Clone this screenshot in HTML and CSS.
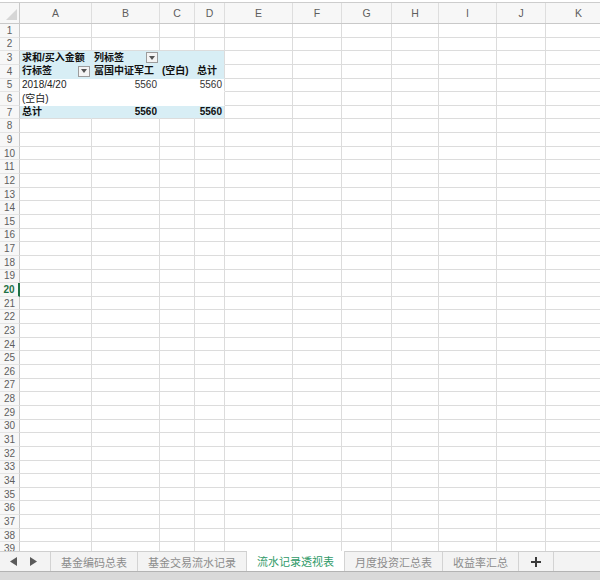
FILE: index.html
```html
<!DOCTYPE html>
<html lang="zh-CN">
<head>
<meta charset="utf-8">
<title>流水记录透视表</title>
<link rel="stylesheet" href="styles.css">
</head>
<body>
<div class="app">
  <div class="top"></div>
  <div class="sheet">
    <div class="row head">
      <div class="corner"><svg width="19" height="20" viewBox="0 0 19 20"><polygon points="6,17 17,17 17,6" fill="#d6d6d6"/></svg></div>
      <div class="ch">A</div><div class="ch">B</div><div class="ch">C</div><div class="ch">D</div><div class="ch">E</div><div class="ch">F</div><div class="ch">G</div><div class="ch">H</div><div class="ch">I</div><div class="ch">J</div><div class="ch">K</div>
    </div>
    <div class="row"><div class="rh">1</div><div class="c"></div><div class="c"></div><div class="c"></div><div class="c"></div><div class="c"></div><div class="c"></div><div class="c"></div><div class="c"></div><div class="c"></div><div class="c"></div><div class="c"></div></div>
    <div class="row"><div class="rh">2</div><div class="c"></div><div class="c"></div><div class="c"></div><div class="c"></div><div class="c"></div><div class="c"></div><div class="c"></div><div class="c"></div><div class="c"></div><div class="c"></div><div class="c"></div></div>
    <div class="row"><div class="rh">3</div>
      <div class="c pv blue b">求和/买入金额</div>
      <div class="c pv blue b">列标签<span class="dd"><svg width="6" height="4" viewBox="0 0 6 4"><polygon points="0,0 6,0 3,4" fill="#555"/></svg></span></div>
      <div class="c pv blue"></div>
      <div class="c pv blue end"></div>
      <div class="c"></div><div class="c"></div><div class="c"></div><div class="c"></div><div class="c"></div><div class="c"></div><div class="c"></div></div>
    <div class="row"><div class="rh">4</div>
      <div class="c pv blue b">行标签<span class="dd"><svg width="6" height="4" viewBox="0 0 6 4"><polygon points="0,0 6,0 3,4" fill="#555"/></svg></span></div>
      <div class="c pv blue b">富国中证军工</div>
      <div class="c pv blue b">(空白)</div>
      <div class="c pv blue b end">总计</div>
      <div class="c"></div><div class="c"></div><div class="c"></div><div class="c"></div><div class="c"></div><div class="c"></div><div class="c"></div></div>
    <div class="row"><div class="rh">5</div>
      <div class="c pv">2018/4/20</div>
      <div class="c pv r">5560</div>
      <div class="c pv"></div>
      <div class="c pv r end">5560</div>
      <div class="c"></div><div class="c"></div><div class="c"></div><div class="c"></div><div class="c"></div><div class="c"></div><div class="c"></div></div>
    <div class="row"><div class="rh">6</div>
      <div class="c pv">(空白)</div>
      <div class="c pv"></div>
      <div class="c pv"></div>
      <div class="c pv end"></div>
      <div class="c"></div><div class="c"></div><div class="c"></div><div class="c"></div><div class="c"></div><div class="c"></div><div class="c"></div></div>
    <div class="row"><div class="rh">7</div>
      <div class="c pv blue b last">总计</div>
      <div class="c pv blue b r last">5560</div>
      <div class="c pv blue last"></div>
      <div class="c pv blue b r end last">5560</div>
      <div class="c"></div><div class="c"></div><div class="c"></div><div class="c"></div><div class="c"></div><div class="c"></div><div class="c"></div></div>
    <div class="row"><div class="rh">8</div><div class="c"></div><div class="c"></div><div class="c"></div><div class="c"></div><div class="c"></div><div class="c"></div><div class="c"></div><div class="c"></div><div class="c"></div><div class="c"></div><div class="c"></div></div>
    <div class="row"><div class="rh">9</div><div class="c"></div><div class="c"></div><div class="c"></div><div class="c"></div><div class="c"></div><div class="c"></div><div class="c"></div><div class="c"></div><div class="c"></div><div class="c"></div><div class="c"></div></div>
    <div class="row"><div class="rh">10</div><div class="c"></div><div class="c"></div><div class="c"></div><div class="c"></div><div class="c"></div><div class="c"></div><div class="c"></div><div class="c"></div><div class="c"></div><div class="c"></div><div class="c"></div></div>
    <div class="row"><div class="rh">11</div><div class="c"></div><div class="c"></div><div class="c"></div><div class="c"></div><div class="c"></div><div class="c"></div><div class="c"></div><div class="c"></div><div class="c"></div><div class="c"></div><div class="c"></div></div>
    <div class="row"><div class="rh">12</div><div class="c"></div><div class="c"></div><div class="c"></div><div class="c"></div><div class="c"></div><div class="c"></div><div class="c"></div><div class="c"></div><div class="c"></div><div class="c"></div><div class="c"></div></div>
    <div class="row"><div class="rh">13</div><div class="c"></div><div class="c"></div><div class="c"></div><div class="c"></div><div class="c"></div><div class="c"></div><div class="c"></div><div class="c"></div><div class="c"></div><div class="c"></div><div class="c"></div></div>
    <div class="row"><div class="rh">14</div><div class="c"></div><div class="c"></div><div class="c"></div><div class="c"></div><div class="c"></div><div class="c"></div><div class="c"></div><div class="c"></div><div class="c"></div><div class="c"></div><div class="c"></div></div>
    <div class="row"><div class="rh">15</div><div class="c"></div><div class="c"></div><div class="c"></div><div class="c"></div><div class="c"></div><div class="c"></div><div class="c"></div><div class="c"></div><div class="c"></div><div class="c"></div><div class="c"></div></div>
    <div class="row"><div class="rh">16</div><div class="c"></div><div class="c"></div><div class="c"></div><div class="c"></div><div class="c"></div><div class="c"></div><div class="c"></div><div class="c"></div><div class="c"></div><div class="c"></div><div class="c"></div></div>
    <div class="row"><div class="rh">17</div><div class="c"></div><div class="c"></div><div class="c"></div><div class="c"></div><div class="c"></div><div class="c"></div><div class="c"></div><div class="c"></div><div class="c"></div><div class="c"></div><div class="c"></div></div>
    <div class="row"><div class="rh">18</div><div class="c"></div><div class="c"></div><div class="c"></div><div class="c"></div><div class="c"></div><div class="c"></div><div class="c"></div><div class="c"></div><div class="c"></div><div class="c"></div><div class="c"></div></div>
    <div class="row"><div class="rh">19</div><div class="c"></div><div class="c"></div><div class="c"></div><div class="c"></div><div class="c"></div><div class="c"></div><div class="c"></div><div class="c"></div><div class="c"></div><div class="c"></div><div class="c"></div></div>
    <div class="row"><div class="rh sel">20</div><div class="c"></div><div class="c"></div><div class="c"></div><div class="c"></div><div class="c"></div><div class="c"></div><div class="c"></div><div class="c"></div><div class="c"></div><div class="c"></div><div class="c"></div></div>
    <div class="row"><div class="rh">21</div><div class="c"></div><div class="c"></div><div class="c"></div><div class="c"></div><div class="c"></div><div class="c"></div><div class="c"></div><div class="c"></div><div class="c"></div><div class="c"></div><div class="c"></div></div>
    <div class="row"><div class="rh">22</div><div class="c"></div><div class="c"></div><div class="c"></div><div class="c"></div><div class="c"></div><div class="c"></div><div class="c"></div><div class="c"></div><div class="c"></div><div class="c"></div><div class="c"></div></div>
    <div class="row"><div class="rh">23</div><div class="c"></div><div class="c"></div><div class="c"></div><div class="c"></div><div class="c"></div><div class="c"></div><div class="c"></div><div class="c"></div><div class="c"></div><div class="c"></div><div class="c"></div></div>
    <div class="row"><div class="rh">24</div><div class="c"></div><div class="c"></div><div class="c"></div><div class="c"></div><div class="c"></div><div class="c"></div><div class="c"></div><div class="c"></div><div class="c"></div><div class="c"></div><div class="c"></div></div>
    <div class="row"><div class="rh">25</div><div class="c"></div><div class="c"></div><div class="c"></div><div class="c"></div><div class="c"></div><div class="c"></div><div class="c"></div><div class="c"></div><div class="c"></div><div class="c"></div><div class="c"></div></div>
    <div class="row"><div class="rh">26</div><div class="c"></div><div class="c"></div><div class="c"></div><div class="c"></div><div class="c"></div><div class="c"></div><div class="c"></div><div class="c"></div><div class="c"></div><div class="c"></div><div class="c"></div></div>
    <div class="row"><div class="rh">27</div><div class="c"></div><div class="c"></div><div class="c"></div><div class="c"></div><div class="c"></div><div class="c"></div><div class="c"></div><div class="c"></div><div class="c"></div><div class="c"></div><div class="c"></div></div>
    <div class="row"><div class="rh">28</div><div class="c"></div><div class="c"></div><div class="c"></div><div class="c"></div><div class="c"></div><div class="c"></div><div class="c"></div><div class="c"></div><div class="c"></div><div class="c"></div><div class="c"></div></div>
    <div class="row"><div class="rh">29</div><div class="c"></div><div class="c"></div><div class="c"></div><div class="c"></div><div class="c"></div><div class="c"></div><div class="c"></div><div class="c"></div><div class="c"></div><div class="c"></div><div class="c"></div></div>
    <div class="row"><div class="rh">30</div><div class="c"></div><div class="c"></div><div class="c"></div><div class="c"></div><div class="c"></div><div class="c"></div><div class="c"></div><div class="c"></div><div class="c"></div><div class="c"></div><div class="c"></div></div>
    <div class="row"><div class="rh">31</div><div class="c"></div><div class="c"></div><div class="c"></div><div class="c"></div><div class="c"></div><div class="c"></div><div class="c"></div><div class="c"></div><div class="c"></div><div class="c"></div><div class="c"></div></div>
    <div class="row"><div class="rh">32</div><div class="c"></div><div class="c"></div><div class="c"></div><div class="c"></div><div class="c"></div><div class="c"></div><div class="c"></div><div class="c"></div><div class="c"></div><div class="c"></div><div class="c"></div></div>
    <div class="row"><div class="rh">33</div><div class="c"></div><div class="c"></div><div class="c"></div><div class="c"></div><div class="c"></div><div class="c"></div><div class="c"></div><div class="c"></div><div class="c"></div><div class="c"></div><div class="c"></div></div>
    <div class="row"><div class="rh">34</div><div class="c"></div><div class="c"></div><div class="c"></div><div class="c"></div><div class="c"></div><div class="c"></div><div class="c"></div><div class="c"></div><div class="c"></div><div class="c"></div><div class="c"></div></div>
    <div class="row"><div class="rh">35</div><div class="c"></div><div class="c"></div><div class="c"></div><div class="c"></div><div class="c"></div><div class="c"></div><div class="c"></div><div class="c"></div><div class="c"></div><div class="c"></div><div class="c"></div></div>
    <div class="row"><div class="rh">36</div><div class="c"></div><div class="c"></div><div class="c"></div><div class="c"></div><div class="c"></div><div class="c"></div><div class="c"></div><div class="c"></div><div class="c"></div><div class="c"></div><div class="c"></div></div>
    <div class="row"><div class="rh">37</div><div class="c"></div><div class="c"></div><div class="c"></div><div class="c"></div><div class="c"></div><div class="c"></div><div class="c"></div><div class="c"></div><div class="c"></div><div class="c"></div><div class="c"></div></div>
    <div class="row"><div class="rh">38</div><div class="c"></div><div class="c"></div><div class="c"></div><div class="c"></div><div class="c"></div><div class="c"></div><div class="c"></div><div class="c"></div><div class="c"></div><div class="c"></div><div class="c"></div></div>
    <div class="row"><div class="rh">39</div><div class="c"></div><div class="c"></div><div class="c"></div><div class="c"></div><div class="c"></div><div class="c"></div><div class="c"></div><div class="c"></div><div class="c"></div><div class="c"></div><div class="c"></div></div>
  </div>
  <div class="tabs">
    <div class="nav">
      <svg width="7" height="9" viewBox="0 0 7 9"><polygon points="7,0 7,9 0,4.5" fill="#5a5a5a"/></svg>
      <svg width="7" height="9" viewBox="0 0 7 9"><polygon points="0,0 0,9 7,4.5" fill="#5a5a5a"/></svg>
    </div>
    <div class="tab">基金编码总表</div>
    <div class="tab">基金交易流水记录</div>
    <div class="tab on">流水记录透视表</div>
    <div class="tab">月度投资汇总表</div>
    <div class="tab">收益率汇总</div>
    <div class="tab add"><svg width="10" height="10" viewBox="0 0 10 10"><rect x="4" y="0" width="2" height="10" fill="#3a3a3a"/><rect x="0" y="4" width="10" height="2" fill="#3a3a3a"/></svg></div>
  </div>
  <div class="foot"></div>
</div>
</body>
</html>
```

FILE: styles.css
```css
* { box-sizing: border-box; }
html, body { margin: 0; padding: 0; }
body {
  width: 600px;
  height: 580px;
  overflow: hidden;
  background: #fff;
  font-family: "Liberation Sans", "Noto Sans CJK SC", sans-serif;
}
.app { display: flex; flex-direction: column; height: 580px; }
.top { flex: none; height: 3px; border-bottom: 1px solid #cdcdcd; }

.sheet { flex: none; height: 548px; overflow: hidden; }
.row {
  display: grid;
  grid-template-columns: 20px 72px 68px 35px 30px 68px 49px 50px 47px 58px 49px 66px;
  height: 13.65px;
}
.head { height: 21px; background: #f7f7f7; border-bottom: 1px solid #c9c9c9; }
.corner { border-right: 1px solid #c9c9c9; display: flex; }
.ch {
  border-right: 1px solid #dedede;
  display: flex; align-items: center; justify-content: center;
  font-size: 10.5px; color: #5e5e5e;
}
.rh {
  background: #f7f7f7;
  border-right: 1px solid #c9c9c9;
  border-bottom: 1px solid #e4e4e4;
  display: flex; align-items: center; justify-content: center;
  font-size: 10px; color: #5e5e5e;
}
.rh.sel { color: #1e7145; font-weight: bold; border-right: 2px solid #1e7145; }

.c {
  border-right: 1px solid #dcdcdc;
  border-bottom: 1px solid #dcdcdc;
  padding: 0 2px;
  display: flex; align-items: center;
  font-size: 10px; line-height: 12px;
  color: #222;
  white-space: nowrap;
  overflow: hidden;
}
.pv { border-right-color: transparent; border-bottom-color: transparent; }
.pv.end { border-right-color: #dcdcdc; }
.pv.last { border-bottom-color: #dcdcdc; }
.blue { background: #d8eef5; }
.b { font-weight: bold; color: #111; }
.r { justify-content: flex-end; color: #333; }
.r.b { color: #111; }
.dd {
  margin-left: auto;
  margin-right: -1px;
  width: 12px; height: 11px;
  border: 1px solid #9c9c9c;
  background: #f4f4f4;
  display: flex; align-items: center; justify-content: center;
  align-self: flex-start;
  margin-top: 1px;
}

.tabs {
  flex: none;
  height: 20px;
  border-top: 1px solid #cfcfcf;
  background: #f3f3f3;
  display: flex;
}
.nav {
  width: 51px;
  display: flex; align-items: center;
  gap: 13px;
  padding-left: 10px;
  border-right: 1px solid #d3d3d3;
}
.tab {
  padding: 0 10px;
  border-right: 1px solid #d3d3d3;
  display: flex; align-items: center;
  font-family: "Noto Sans CJK SC", sans-serif;
  font-size: 11px;
  color: #8c8c8c;
}
.tab.on {
  background: #fff;
  color: #2f9a68;
  margin-top: -1px;
  box-shadow: 0 1px 0 #b8b8b8;
}
.tab.add { width: 35px; padding: 0; justify-content: center; }
.foot { flex: 1; background: #d9d9d9; border-top: 1px solid #b3b3b3; }
```
